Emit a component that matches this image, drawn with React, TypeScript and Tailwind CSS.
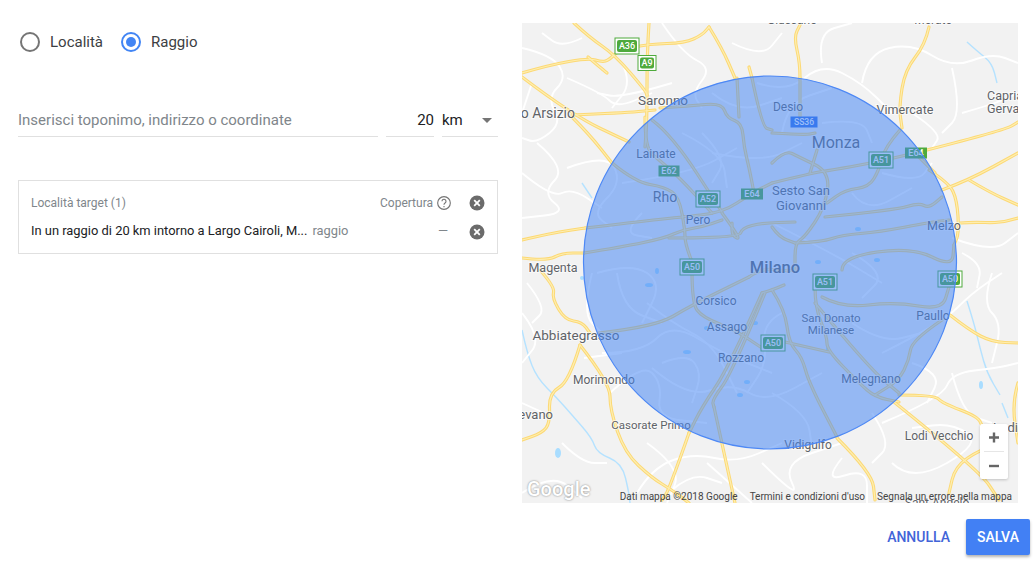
import React from 'react';

const font = { fontFamily: 'Roboto, "Liberation Sans", sans-serif' };

// rounds the corners of a "x,y x,y ..." list so the roads curve
function smooth(points: string) {
  const pts = points.split(' ').map((p) => p.split(',').map(Number));
  let d = `M${pts[0][0]} ${pts[0][1]}`;
  for (let i = 1; i < pts.length - 1; i++) {
    const mx = (pts[i][0] + pts[i + 1][0]) / 2;
    const my = (pts[i][1] + pts[i + 1][1]) / 2;
    d += ` Q${pts[i][0]} ${pts[i][1]} ${mx} ${my}`;
  }
  const last = pts[pts.length - 1];
  return `${d} L${last[0]} ${last[1]}`;
}

const yellowRoads = [
  '52,0 67,14 93,32 123,67 125,72',
  '127,0 125,30 125,97 123,124',
  '0,50 27,42 67,35 80,39 87,37 97,27 127,21 163,20 180,12 187,4',
  '66,34 80,46 85,50',
  '0,54 50,92 107,119',
  '50,92 100,90 133,87',
  '50,94 67,111 90,140',
  '187,4 200,25 213,55',
  '227,44 230,55',
  '0,217 30,210 63,205',
  '0,235 25,238 40,230 62,230',
  '123,94 123,125 137,137 157,154 190,190',
  '138,85 167,83 200,80 205,95 220,100 222,124 227,144 232,170',
  '215,55 217,94',
  '230,55 240,104 250,107',
  '130,97 150,112 200,189',
  '90,140 113,159 143,164 157,174 163,207 163,220 173,247',
  '63,205 157,194 200,190 230,170 250,160',
  '62,230 100,224 143,215 160,207 180,204 200,197',
  '147,215 217,215 220,205 240,200 273,199',
  '200,190 220,217 210,213 210,200',
  '278,55 278,40 272,14 278,2',
  '278,55 278,94',
  '250,110 283,112 293,110',
  '295,127 288,150',
  '250,140 263,127 277,134 308,149 303,184 283,214 273,220 273,247',
  '250,160 290,150 310,147 350,140 393,130',
  '378,107 363,124 357,147 347,164 323,167 305,180',
  '303,194 373,187 397,180 407,185 420,174',
  '273,220 300,219 320,212 357,209 410,199 427,197',
  '320,247 320,234 390,224 430,244 432,222',
  '250,204 257,214 273,220',
  '393,130 413,150',
  '405,127 483,107 496,99',
  '407,147 427,160 435,177 437,210 432,222',
  '420,167 447,157 496,130',
  '447,157 467,169 496,182',
  '438,200 450,199 477,200 496,195',
  '407,4 403,22 383,47 377,84 380,105',
  '18,247 33,264 30,275 43,297 60,299 68,310',
  '58,322 47,359 27,370 28,400 20,410 0,417',
  '58,322 88,360 88,387 103,430 130,455 150,467 167,480',
  '167,410 147,467 140,477',
  '192,384 213,480',
  '170,247 170,280 180,294 213,307 240,325',
  '77,310 133,304 170,282 227,254',
  '240,270 207,344 180,384 167,410',
  '243,270 210,350 190,377 192,384',
  '250,267 263,287 267,320 280,334 287,360 315,414',
  '263,319 307,329',
  '293,264 293,284 305,314 305,327 337,360 353,374 377,379',
  '293,280 347,345 377,370',
  '300,274 320,285 373,279 420,287 427,264',
  '420,297 390,317 387,337 377,357 353,372',
  '377,372 413,372 420,380 457,394 460,405 483,417',
  '372,379 457,447 477,477',
  '428,292 447,307 470,319 496,320',
  '315,415 350,450 353,477',
  '483,417 457,427 433,444 427,470',
  '496,360 490,380 496,420',
  '227,254 240,245 262,248 273,247',
  '240,270 250,267 262,262',
];

const whiteRoads = [
  '0,25 30,32 45,55 25,75 40,100 15,120 0,115',
  '45,55 80,70 95,85 130,70',
  '15,120 45,145 20,170 45,190 0,195',
  '45,145 85,130 100,160 70,190 90,205',
  '0,150 30,175 50,165 80,185',
  '140,0 160,30 190,45 170,70 180,85',
  '100,40 110,60 90,85',
  '210,20 240,35 260,10',
  '235,60 265,70 300,40 340,60 370,90',
  '300,40 295,10 330,0',
  '340,60 345,30 390,20 430,45 470,30 496,40',
  '390,90 420,110 410,125',
  '430,45 440,90 420,110',
  '440,90 475,80 496,70',
  '100,160 170,150 215,125',
  '190,130 240,140 280,120',
  '75,250 110,240 140,260 120,300',
  '80,330 120,330 150,300 200,330 250,350',
  '130,345 165,375 210,360 245,380 300,350',
  '250,200 310,230 360,260',
  '360,330 420,300 450,270 480,250',
  '0,290 20,315 0,340',
  '22,390 0,380',
  '62,335 100,330',
  '88,370 120,340 140,360 135,395 185,400',
  '125,420 160,445 145,480',
  '115,470 130,445 170,430 215,440 260,420',
  '185,440 230,480',
  '240,440 280,480 260,440 320,420',
  '320,435 300,460 345,445 345,480',
  '370,440 390,460 460,420 430,400 390,405',
  '360,400 420,375 430,350 475,345 496,340',
  '430,350 440,390 470,400',
  '470,250 460,280 480,300 470,340',
  '430,215 470,230 496,210',
  '0,470 30,450 60,475',
  '40,420 60,440 85,440',
  '150,467 170,450 200,460',
  '160,110 200,130 205,165',
  '300,100 340,95 350,120',
  '260,110 265,80 310,65',
  '125,280 150,300 190,320 215,370',
  '190,70 215,90 260,75',
  '330,170 345,190 390,165',
  '360,150 395,160 410,140',
  '330,230 365,250 340,275',
  '95,250 100,285 140,300',
  '140,340 165,330 180,350 170,380',
  '250,370 285,390 290,425',
  '330,300 360,320 400,310',
  '260,290 240,300 245,340 225,370',
  '440,230 460,240 455,265',
  '390,340 420,350 405,380',
  '350,390 370,420 350,440',
  '5,260 25,285 10,300',
  '70,250 60,290 80,310',
  '180,110 205,135 190,160',
  '120,190 100,210 130,215',
  '10,60 0,90',
  '60,15 40,25 20,10',
  '150,60 100,75 75,70',
];

const waterLines = [
  '0,307 5,330 15,355 35,375 50,392 70,415 75,430 100,440 107,470 108,480',
  '445,19 455,28 470,40 475,60',
  '445,278 452,300 458,325 465,350 478,372',
  '480,380 486,395',
  '60,160 70,175',
];

const lakes = [
  [127, 262, 4, 2], [165, 329, 4, 2], [200, 333, 2, 4], [225, 359, 3, 2], [218, 372, 3, 2],
  [355, 237, 3, 2], [336, 206, 3, 2], [233, 300, 3, 2], [306, 326, 2, 3], [296, 239, 3, 2],
  [459, 362, 2, 4], [36, 430, 3, 5], [135, 248, 2, 3], [185, 305, 3, 2], [60, 255, 2, 2], [105, 200, 3, 1],
];

const cityLabels = [
  { x: 270, y: 1, text: 'Giussano', size: 12 },
  { x: 411, y: 1, text: 'Merate', size: 12 },
  { x: 141, y: 82, text: 'Saronno', size: 13.5 },
  { x: 53, y: 95, text: 'Busto Arsizio', size: 14, anchor: 'end' },
  { x: 266, y: 88, text: 'Desio', size: 12 },
  { x: 314, y: 125, text: 'Monza', size: 16 },
  { x: 134, y: 135, text: 'Lainate', size: 12 },
  { x: 143, y: 179, text: 'Rho', size: 14 },
  { x: 176, y: 201, text: 'Pero', size: 12 },
  { x: 279, y: 172, text: 'Sesto San', size: 13 },
  { x: 279, y: 187, text: 'Giovanni', size: 13 },
  { x: 253, y: 250, text: 'Milano', size: 16.5, weight: 500 },
  { x: 383, y: 91, text: 'Vimercate', size: 12.5 },
  { x: 465, y: 77, text: 'Capriate', size: 12.5, anchor: 'start' },
  { x: 465, y: 90, text: 'Gervasio', size: 12.5, anchor: 'start' },
  { x: 422, y: 207, text: 'Melzo', size: 12.5 },
  { x: 31, y: 249, text: 'Magenta', size: 12.5 },
  { x: 194, y: 282, text: 'Corsico', size: 12 },
  { x: 205, y: 308, text: 'Assago', size: 12 },
  { x: 219, y: 339, text: 'Rozzano', size: 12 },
  { x: 309, y: 299, text: 'San Donato', size: 11.5 },
  { x: 309, y: 311, text: 'Milanese', size: 11.5 },
  { x: 349, y: 360, text: 'Melegnano', size: 12 },
  { x: 411, y: 297, text: 'Paullo', size: 12 },
  { x: 54, y: 317, text: 'Abbiategrasso', size: 13.5 },
  { x: 82, y: 361, text: 'Morimondo', size: 12 },
  { x: 129, y: 406, text: 'Casorate Primo', size: 11.5 },
  { x: 31, y: 396, text: 'Vigevano', size: 13, anchor: 'end' },
  { x: 286, y: 426, text: 'Vidigulfo', size: 12 },
  { x: 417, y: 417, text: 'Lodi Vecchio', size: 12 },
  { x: 471, y: 409, text: 'Lodi', size: 13, anchor: 'start' },
  { x: 415, y: 484, text: 'Sant Angelo', size: 12 },
];

const shields = [
  { x: 105, y: 23, text: 'A36', w: 24, h: 16, boxed: true },
  { x: 125, y: 40, text: 'A9', w: 18, h: 15, boxed: true },
  { x: 147, y: 148, text: 'E62', w: 21, h: 11, boxed: false },
  { x: 230, y: 171, text: 'E64', w: 22, h: 11, boxed: false },
  { x: 394, y: 130, text: 'E64', w: 22, h: 11, boxed: false },
  { x: 186, y: 176, text: 'A52', w: 24, h: 16, boxed: true },
  { x: 359, y: 137, text: 'A51', w: 24, h: 16, boxed: true },
  { x: 170, y: 244, text: 'A50', w: 24, h: 16, boxed: true },
  { x: 303, y: 259, text: 'A51', w: 24, h: 16, boxed: true },
  { x: 251, y: 320, text: 'A50', w: 24, h: 16, boxed: true },
  { x: 428, y: 256, text: 'A50', w: 24, h: 16, boxed: true },
];

function MapDrawing() {
  return (
    <svg viewBox="0 0 496 480" width="496" height="480" className="block" style={font}>
      <rect width="496" height="480" fill="#f2f2f2" />
      {waterLines.map((p, i) => (
        <path key={i} d={smooth(p)} fill="none" stroke="#b5e2ff" strokeWidth={1.4} />
      ))}
      {lakes.map(([cx, cy, rx, ry], i) => (
        <ellipse key={i} cx={cx} cy={cy} rx={rx} ry={ry} fill="#a9ddff" />
      ))}
      {whiteRoads.map((p, i) => (
        <path key={i} d={smooth(p)} fill="none" stroke="#ffffff" strokeWidth={1.9} />
      ))}
      {yellowRoads.map((p, i) => (
        <path key={i} d={smooth(p)} fill="none" stroke="#fcd975" strokeWidth={3.2} strokeLinecap="round" />
      ))}
      {yellowRoads.map((p, i) => (
        <path key={i} d={smooth(p)} fill="none" stroke="#feeeb0" strokeWidth={1.2} strokeLinecap="round" />
      ))}
      {cityLabels.map((l) => (
        <text
          key={l.text}
          x={l.x}
          y={l.y}
          fontSize={l.size}
          fontWeight={l.weight ?? 400}
          textAnchor={l.anchor ?? 'middle'}
          fill="#5f6368"
          stroke="#ffffff"
          strokeWidth={2}
          strokeOpacity={0.6}
          paintOrder="stroke"
        >
          {l.text}
        </text>
      ))}
      {shields.map((s, i) => (
        <g key={i}>
          {s.boxed && (
            <rect x={s.x - s.w / 2} y={s.y - s.h / 2} width={s.w} height={s.h} fill="#ffffff" stroke="#4eaa3d" strokeWidth={1} />
          )}
          <rect
            x={s.x - s.w / 2 + (s.boxed ? 2 : 0)}
            y={s.y - s.h / 2 + (s.boxed ? 2 : 0)}
            width={s.w - (s.boxed ? 4 : 0)}
            height={s.h - (s.boxed ? 4 : 0)}
            rx={s.boxed ? 2 : 0}
            fill="#4eaa3d"
          />
          <text x={s.x} y={s.y + 3} fontSize={9} fontWeight={500} textAnchor="middle" fill="#ffffff">
            {s.text}
          </text>
        </g>
      ))}
      <rect x="268.5" y="93.5" width="27" height="11" fill="#2f6fe8" />
      <text x="282" y="102" fontSize={8.5} fontWeight={500} textAnchor="middle" fill="#ffffff">
        SS36
      </text>
      <circle cx="248" cy="239.5" r="186.5" fill="#4285f4" fillOpacity={0.53} stroke="#4d88f5" strokeWidth={1.2} />
    </svg>
  );
}

function RemoveIcon() {
  return (
    <svg width="16" height="16" viewBox="0 0 16 16" className="shrink-0">
      <circle cx="8" cy="8" r="7.5" fill="#6b6b6b" />
      <path d="M5.2 5.2l5.6 5.6M10.8 5.2l-5.6 5.6" stroke="#ffffff" strokeWidth={1.8} />
    </svg>
  );
}

function Radio({ label, checked }: { label: string; checked?: boolean }) {
  return (
    <div className="flex items-center gap-[10px]">
      <span
        className={`flex h-5 w-5 items-center justify-center rounded-full border-2 ${
          checked ? 'border-[#4285f4]' : 'border-[#757575]'
        }`}
      >
        {checked && <span className="h-[10px] w-[10px] rounded-full bg-[#4285f4]" />}
      </span>
      <span className="text-[15px] text-[#3c4043]">{label}</span>
    </div>
  );
}

export default function App() {
  return (
    <div className="flex h-[562px] w-[1036px] flex-col bg-white" style={font}>
      <div className="flex pl-[18px] pt-[23px]">
        <div className="w-[480px]">
          <div className="flex h-[38px] items-center gap-[18px] pl-[2px]">
            <Radio label="Località" />
            <Radio label="Raggio" checked />
          </div>

          <div className="mt-[39px] flex h-[37px] gap-2 text-[15px]">
            <div className="flex w-[360px] items-center border-b border-[#e0e0e0] pt-[4px] text-[#80868b]">
              Inserisci toponimo, indirizzo o coordinate
            </div>
            <div className="flex w-[48px] items-center justify-end border-b border-[#e0e0e0] pt-[4px] text-[#202124]">20</div>
            <div className="flex w-[56px] items-center justify-between border-b border-[#e0e0e0] pr-[6px] pt-[4px] text-[#202124]">
              <span>km</span>
              <span className="h-0 w-0 border-x-[5px] border-t-[5px] border-x-transparent border-t-[#757575]" />
            </div>
          </div>

          <div className="mt-[43px] h-[74px] border border-[#e0e0e0] pl-[12px] pr-[12px] pt-[14px]">
            <div className="flex h-4 items-center justify-between text-[12px] text-[#80868b]">
              <span>Località target (1)</span>
              <div className="flex items-center">
                <span>Copertura</span>
                <svg width="16" height="16" viewBox="0 0 24 24" className="ml-[3px] mr-[17px]" fill="none" stroke="#757575" strokeWidth={1.7}>
                  <circle cx="12" cy="12" r="9.5" />
                  <path d="M9 9.5a3 3 0 1 1 4.6 2.5c-1 .7-1.6 1.2-1.6 2.5" />
                  <path d="M12 16.5v2" />
                </svg>
                <RemoveIcon />
              </div>
            </div>
            <div className="mt-[13px] flex h-4 items-center text-[12.9px]">
              <span className="mb-[2px] text-[#202124]">In un raggio di 20 km intorno a Largo Cairoli, M...</span>
              <span className="mb-[2px] ml-[5px] text-[#80868b]">raggio</span>
              <span className="mb-[2px] ml-auto mr-[21px] text-[#80868b]">—</span>
              <RemoveIcon />
            </div>
          </div>
        </div>

        <div className="relative ml-[24px] h-[480px] w-[496px] overflow-hidden">
          <MapDrawing />
          <span className="absolute bottom-[1px] left-[5px] text-[20px] font-medium leading-[26px] text-white [text-shadow:0_0_2px_#777]">
            Google
          </span>
          <div className="absolute bottom-0 right-0 flex h-[14px] items-center text-[10px] text-[#444444]">
            <span className="mr-3">Dati mappa ©2018 Google</span>
            <span className="mr-3">Termini e condizioni d'uso</span>
            <span className="mr-[6px]">Segnala un errore nella mappa</span>
          </div>
          <div className="absolute left-[458px] top-[401px] flex h-[55px] w-[28px] flex-col items-center rounded-[2px] bg-white shadow-[0_1px_3px_rgba(0,0,0,0.2)]">
            <svg width="28" height="27" viewBox="0 0 28 27">
              <path d="M14 8.5v10M9 13.5h10" stroke="#666666" strokeWidth={2.4} />
            </svg>
            <div className="h-px w-5 bg-[#e6e6e6]" />
            <svg width="28" height="27" viewBox="0 0 28 27">
              <path d="M9 14h10" stroke="#666666" strokeWidth={2.4} />
            </svg>
          </div>
        </div>
      </div>

      <div className="flex items-center justify-end gap-4 pr-[6px] pt-4">
        <button className="text-[14px] font-medium text-[#4264d8]">ANNULLA</button>
        <button className="h-9 w-16 rounded-[2px] bg-[#4280f4] text-[14px] font-medium text-white shadow-[0_2px_3px_rgba(0,0,0,0.3)]">
          SALVA
        </button>
      </div>
    </div>
  );
}
